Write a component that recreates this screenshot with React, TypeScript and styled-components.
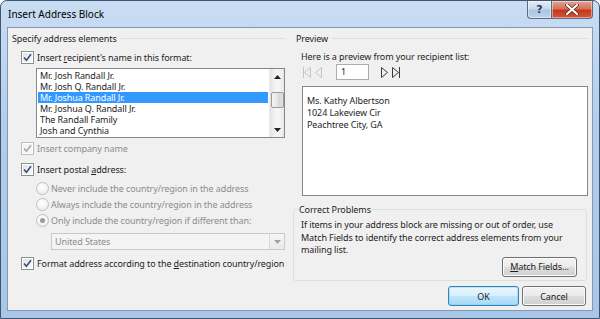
import React from "react";
import styled, { createGlobalStyle } from "styled-components";

const GlobalStyle = createGlobalStyle`
  html, body { margin: 0; padding: 0; background: #fff; }
  body {
    font-family: "Noto Sans", "Open Sans", sans-serif;
    font-size: 9px;
    letter-spacing: -0.1px;
    color: #1e1e1e;
  }
  * { box-sizing: border-box; }
`;

const Window = styled.div`
  width: 600px;
  height: 319px;
  display: flex;
  flex-direction: column;
  background: linear-gradient(180deg, #c9ddf2 0%, #b3cdea 40%, #a8c6e8 100%);
  border: 1px solid #3d5573;
  border-radius: 7px 7px 0 0;
  padding: 0 6px 7px;
`;

const TitleBar = styled.div`
  height: 26px;
  display: flex;
  align-items: flex-start;
`;

const Title = styled.div`
  flex: 1;
  padding: 6px 0 0 1px;
  font-size: 10px;
  letter-spacing: 0;
  color: #000;
`;

const CaptionButton = styled.div<{ $close?: boolean }>`
  height: 18px;
  width: ${({ $close }) => ($close ? "41px" : "25px")};
  display: flex;
  align-items: center;
  justify-content: center;
  border: 1px solid #5b6b82;
  border-top: none;
  border-left: ${({ $close }) => ($close ? "none" : "1px solid #5b6b82")};
  border-radius: ${({ $close }) => ($close ? "0 0 4px 0" : "0 0 0 4px")};
  background: ${({ $close }) =>
    $close
      ? "linear-gradient(180deg, #e8a493 0%, #d6725c 45%, #c2391c 55%, #d5553a 100%)"
      : "linear-gradient(180deg, #e3ecf6 0%, #c9d9ec 45%, #aec5e2 55%, #bcd3ee 100%)"};
  color: #2d3f58;
  font-family: "DejaVu Sans", sans-serif;
  font-weight: bold;
  font-size: 11px;
  box-shadow: inset 0 0 0 1px rgba(255, 255, 255, 0.45);
`;

const Client = styled.div`
  flex: 1;
  background: #f0f0f0;
  border: 1px solid #8299b5;
  display: grid;
  grid-template-columns: 273px 295px;
  column-gap: 8px;
  padding: 3px 4px 0;
`;

const Column = styled.div`
  display: flex;
  flex-direction: column;
  min-width: 0;
`;

const GroupHeader = styled.div<{ $inset?: number }>`
  height: 14px;
  display: flex;
  align-items: center;
  padding-left: ${({ $inset }) => $inset ?? 0}px;
  white-space: nowrap;
  &::after {
    content: "";
    flex: 1;
    height: 1px;
    margin-left: 4px;
    background: #d5dfe5;
  }
`;

const Row = styled.div<{ $top: number; $indent: number; $disabled?: boolean }>`
  display: flex;
  align-items: center;
  gap: 3px;
  height: 13px;
  margin-top: ${({ $top }) => $top}px;
  margin-left: ${({ $indent }) => $indent}px;
  color: ${({ $disabled }) => ($disabled ? "#8d8d8d" : "#1e1e1e")};
  white-space: nowrap;
  u { text-decoration: underline; text-underline-offset: 1px; }
`;

const RadioRow = styled(Row)`
  height: 16px;
  gap: 2px;
`;

const Box = styled.span<{ $disabled?: boolean }>`
  width: 13px;
  height: 13px;
  flex: none;
  border: 1px solid ${({ $disabled }) => ($disabled ? "#bcbcbc" : "#8e8f8f")};
  background: ${({ $disabled }) =>
    $disabled
      ? "#f4f4f4"
      : "linear-gradient(135deg, #dcdee2 0%, #f2f2f2 60%, #ffffff 100%)"};
  display: flex;
  align-items: center;
  justify-content: center;
  box-shadow: inset 0 0 0 1px #fff;
`;

const Radio = styled.span<{ $on?: boolean }>`
  width: 13px;
  height: 13px;
  flex: none;
  border-radius: 50%;
  border: 1px solid #c0c0c0;
  background: radial-gradient(circle at 40% 35%, #ffffff 0%, #f0f0f0 70%, #dcdcdc 100%);
  display: flex;
  align-items: center;
  justify-content: center;
  &::after {
    content: "";
    display: ${({ $on }) => ($on ? "block" : "none")};
    width: 5px;
    height: 5px;
    border-radius: 50%;
    background: #9a9a9a;
  }
`;

const Check = ({ disabled }: { disabled?: boolean }) => (
  <Box $disabled={disabled}>
    <svg width="9" height="9" viewBox="0 0 9 9">
      <path
        d="M1 4.5 L3.4 7.2 L8 1.2"
        fill="none"
        stroke={disabled ? "#a8a8a8" : "#3b4f82"}
        strokeWidth="1.6"
      />
    </svg>
  </Box>
);

const ListBox = styled.div`
  margin: 4px 0 0 24px;
  width: 249px;
  height: 70px;
  border: 1px solid #828790;
  background: #fff;
  display: flex;
`;

const ListItems = styled.div`
  flex: 1;
  padding: 1px 1px 0;
  overflow: hidden;
`;

const ListItem = styled.div<{ $selected?: boolean }>`
  height: 11px;
  line-height: 11px;
  padding-left: 2px;
  white-space: nowrap;
  background: ${({ $selected }) => ($selected ? "#3399ff" : "transparent")};
  color: ${({ $selected }) => ($selected ? "#fff" : "#1e1e1e")};
`;

const ScrollBar = styled.div`
  width: 15px;
  background: linear-gradient(90deg, #e3e3e3, #f4f4f4 40%, #f4f4f4 70%, #e6e6e6);
  border-left: 1px solid #ececec;
  display: flex;
  flex-direction: column;
  align-items: center;
`;

const ScrollArrow = styled.div`
  height: 15px;
  display: flex;
  align-items: center;
  justify-content: center;
`;

const Thumb = styled.div`
  margin-top: 8px;
  width: 13px;
  height: 16px;
  border: 1px solid #9a9a9a;
  border-radius: 2px;
  background: linear-gradient(90deg, #f3f3f3, #e6e6e6 50%, #d6d6d6 55%, #e2e2e2);
`;

const Spacer = styled.div`
  flex: 1;
`;

const Combo = styled.div`
  margin: 5px 0 0 39px;
  width: 234px;
  height: 17px;
  border: 1px solid #c9c9c9;
  background: #f4f4f4;
  display: flex;
  align-items: center;
  color: #8d8d8d;
  padding-left: 3px;
`;

const ComboButton = styled.div`
  margin-left: auto;
  width: 15px;
  height: 15px;
  border-left: 1px solid #dadada;
  background: linear-gradient(180deg, #f6f6f6, #e9e9e9);
  display: flex;
  align-items: center;
  justify-content: center;
`;

const Text = styled.div<{ $top: number; $indent: number }>`
  margin-top: ${({ $top }) => $top}px;
  margin-left: ${({ $indent }) => $indent}px;
  height: 13px;
  line-height: 13px;
  white-space: nowrap;
`;

const NavRow = styled.div`
  margin: 1px 0 0 9px;
  height: 16px;
  display: flex;
  align-items: center;
`;

const NavIcon = styled.span<{ $gap?: number }>`
  display: flex;
  margin-left: ${({ $gap }) => $gap ?? 0}px;
`;

const NavInput = styled.div`
  width: 33px;
  height: 16px;
  margin-left: 13px;
  border: 1px solid #abadb3;
  background: #fff;
  padding-left: 4px;
  line-height: 14px;
`;

const PreviewBox = styled.div`
  margin: 6px 0 0 9px;
  width: 286px;
  height: 110px;
  border: 1px solid #828790;
  background: #fff;
  padding: 8px 0 0 4px;
  line-height: 12px;
`;

const Fieldset = styled.fieldset`
  margin: 7px 1px 0 0;
  min-width: 0;
  height: 78px;
  border: 1px solid #d5dfe5;
  border-radius: 3px;
  padding: 0 0 0 7px;
  display: flex;
  flex-direction: column;
  legend {
    padding: 0 1px;
    margin-left: -3px;
    line-height: 13px;
  }
`;

const Para = styled.div`
  margin-top: 3px;
  line-height: 12.5px;
  white-space: nowrap;
`;

const Button = styled.button<{ $width: number; $default?: boolean }>`
  width: ${({ $width }) => $width}px;
  height: 20px;
  padding: 0;
  font: inherit;
  letter-spacing: inherit;
  white-space: nowrap;
  color: #1e1e1e;
  border: 1px solid ${({ $default }) => ($default ? "#3c7fb1" : "#707070")};
  border-radius: 3px;
  background: ${({ $default }) =>
    $default
      ? "linear-gradient(180deg, #eaf6fd 0%, #d9f0fc 48%, #bee6fd 52%, #a7d9f5 100%)"
      : "linear-gradient(180deg, #f2f2f2 0%, #ebebeb 48%, #dddddd 52%, #cfcfcf 100%)"};
  box-shadow: inset 0 0 0 1px ${({ $default }) => ($default ? "#48d5fa55" : "#fcfcfc")};
  u { text-decoration: underline; text-underline-offset: 1px; }
`;

const MatchRow = styled.div`
  margin-top: auto;
  margin-bottom: 3px;
  display: flex;
  justify-content: flex-end;
  padding-right: 9px;
`;

const Footer = styled.div`
  margin-top: 5px;
  display: flex;
  gap: 3px;
  justify-content: flex-end;
  padding-right: 2px;
`;

const Tri = ({ dir, color }: { dir: "up" | "down"; color: string }) => (
  <svg width="7" height="4" viewBox="0 0 7 4">
    <path d={dir === "up" ? "M0 4 L3.5 0 L7 4 Z" : "M0 0 L3.5 4 L7 0 Z"} fill={color} />
  </svg>
);

const NavGlyph = ({ kind, color }: { kind: "first" | "prev" | "next" | "last"; color: string }) => {
  const left = kind === "first" || kind === "prev";
  const bar = kind === "first" || kind === "last";
  const tri = left ? "M8.5 1.5 L2.5 6.5 L8.5 11.5 Z" : "M1.5 1.5 L7.5 6.5 L1.5 11.5 Z";
  return (
    <svg width="10" height="13" viewBox="0 0 10 13">
      <path d={tri} fill="none" stroke={color} strokeWidth="1" strokeLinejoin="round" />
      {bar && (
        <path d={left ? "M1.5 1 L1.5 12" : "M8.5 1 L8.5 12"} stroke={color} strokeWidth="1" />
      )}
    </svg>
  );
};

const names = [
  "Mr. Josh Randall Jr.",
  "Mr. Josh Q. Randall Jr.",
  "Mr. Joshua Randall Jr.",
  "Mr. Joshua Q. Randall Jr.",
  "The Randall Family",
  "Josh and Cynthia",
];

export default function App() {
  return (
    <>
      <GlobalStyle />
      <Window>
        <TitleBar>
          <Title>Insert Address Block</Title>
          <CaptionButton>?</CaptionButton>
          <CaptionButton $close>
            <svg width="14" height="11" viewBox="0 0 14 11">
              <path d="M2 1 L12 10 M12 1 L2 10" stroke="#5a2418" strokeWidth="3.6" strokeLinecap="round" />
              <path d="M2 1 L12 10 M12 1 L2 10" stroke="#fff" strokeWidth="2.2" strokeLinecap="round" />
            </svg>
          </CaptionButton>
        </TitleBar>
        <Client>
          <Column>
            <GroupHeader>Specify address elements</GroupHeader>
            <Row $top={6} $indent={9}>
              <Check />
              <span>
                Insert <u>r</u>ecipient's name in this format:
              </span>
            </Row>
            <ListBox>
              <ListItems>
                {names.map((n, i) => (
                  <ListItem key={n} $selected={i === 2}>
                    {n}
                  </ListItem>
                ))}
              </ListItems>
              <ScrollBar>
                <ScrollArrow>
                  <Tri dir="up" color="#222" />
                </ScrollArrow>
                <Thumb />
                <Spacer />
                <ScrollArrow>
                  <Tri dir="down" color="#222" />
                </ScrollArrow>
              </ScrollBar>
            </ListBox>
            <Row $top={4} $indent={9} $disabled>
              <Check disabled />
              <span>Insert company name</span>
            </Row>
            <Row $top={8} $indent={9}>
              <Check />
              <span>
                Insert postal <u>a</u>ddress:
              </span>
            </Row>
            <RadioRow $top={4} $indent={24} $disabled>
              <Radio />
              <span>Never include the country/region in the address</span>
            </RadioRow>
            <RadioRow $top={0} $indent={24} $disabled>
              <Radio />
              <span>Always include the country/region in the address</span>
            </RadioRow>
            <RadioRow $top={0} $indent={24} $disabled>
              <Radio $on />
              <span>Only include the country/region if different than:</span>
            </RadioRow>
            <Combo>
              United States
              <ComboButton>
                <Tri dir="down" color="#a0a0a0" />
              </ComboButton>
            </Combo>
            <Row $top={7} $indent={9}>
              <Check />
              <span>
                Format address according to the <u>d</u>estination country/region
              </span>
            </Row>
          </Column>

          <Column>
            <GroupHeader $inset={3}>Preview</GroupHeader>
            <Text $top={5} $indent={8}>
              Here is a preview from your recipient list:
            </Text>
            <NavRow>
              <NavIcon>
                <NavGlyph kind="first" color="#c4c4c4" />
              </NavIcon>
              <NavIcon $gap={1}>
                <NavGlyph kind="prev" color="#c4c4c4" />
              </NavIcon>
              <NavInput>1</NavInput>
              <NavIcon $gap={11}>
                <NavGlyph kind="next" color="#3a3a3a" />
              </NavIcon>
              <NavIcon $gap={1}>
                <NavGlyph kind="last" color="#3a3a3a" />
              </NavIcon>
            </NavRow>
            <PreviewBox>
              Ms. Kathy Albertson
              <br />
              1024 Lakeview Cir
              <br />
              Peachtree City, GA
            </PreviewBox>
            <Fieldset>
              <legend>Correct Problems</legend>
              <Para>
                If items in your address block are missing or out of order, use
                <br />
                Match Fields to identify the correct address elements from your
                <br />
                mailing list.
              </Para>
              <MatchRow>
                <Button $width={75}>
                  <u>M</u>atch Fields...
                </Button>
              </MatchRow>
            </Fieldset>
            <Footer>
              <Button $width={71} $default>
                OK
              </Button>
              <Button $width={64}>Cancel</Button>
            </Footer>
          </Column>
        </Client>
      </Window>
    </>
  );
}
